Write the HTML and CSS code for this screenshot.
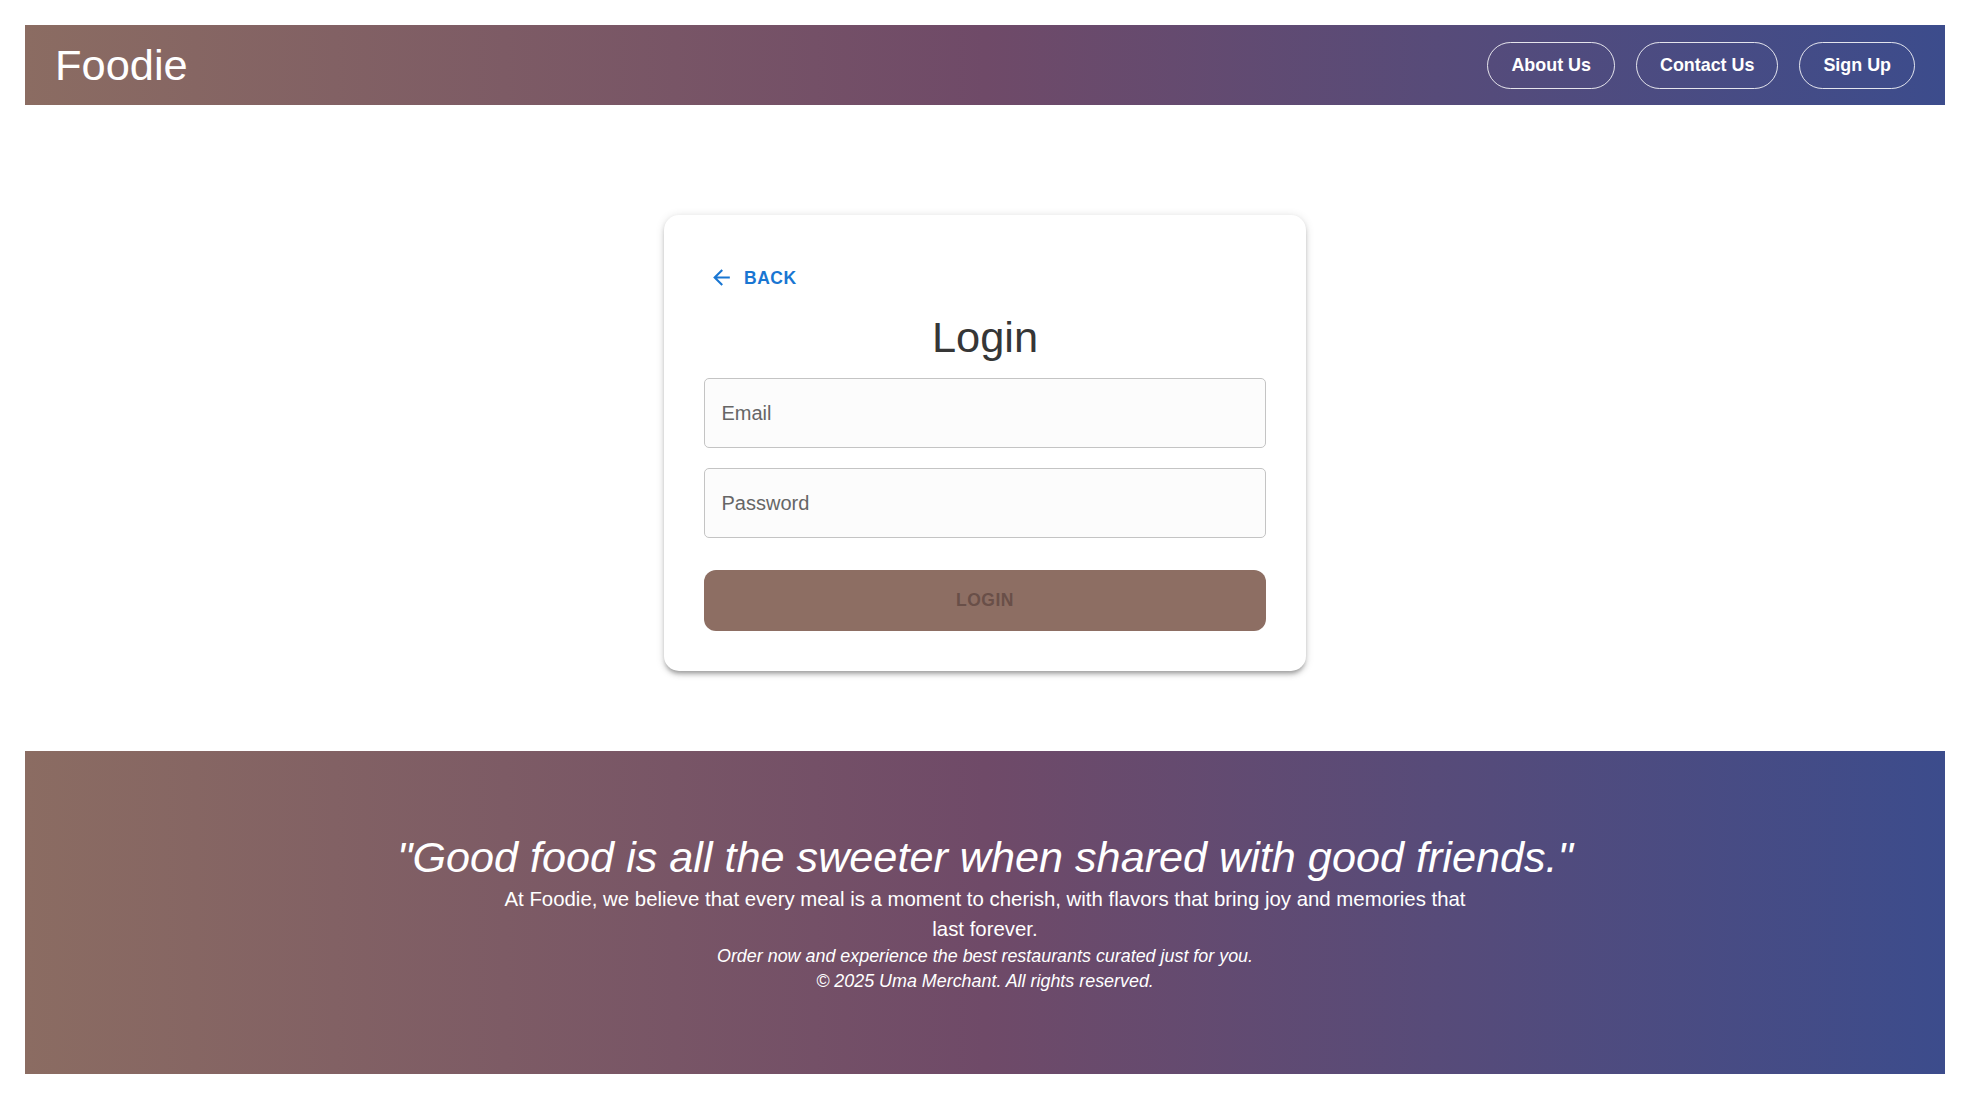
FILE: index.html
```html
<!DOCTYPE html>
<html lang="en">
<head>
<meta charset="utf-8">
<title>Foodie - Login</title>
<link rel="stylesheet" href="styles.css">
</head>
<body>
<header class="topbar">
  <div class="brand">Foodie</div>
  <nav class="nav">
    <a class="nav-btn" href="#">About Us</a>
    <a class="nav-btn" href="#">Contact Us</a>
    <a class="nav-btn" href="#">Sign Up</a>
  </nav>
</header>

<main class="main">
  <section class="card">
    <button class="back-btn" type="button">
      <svg class="back-icon" viewBox="0 0 24 24" aria-hidden="true"><path d="M20 11H7.83l5.59-5.59L12 4l-8 8 8 8 1.41-1.41L7.83 13H20v-2z"/></svg>
      <span>BACK</span>
    </button>
    <h1 class="title">Login</h1>
    <form class="form">
      <input class="field field-first" type="email" placeholder="Email">
      <input class="field field-next" type="password" placeholder="Password">
      <button class="login-btn" type="button">LOGIN</button>
    </form>
  </section>
</main>

<footer class="footer">
  <p class="quote">"Good food is all the sweeter when shared with good friends."</p>
  <p class="about">At Foodie, we believe that every meal is a moment to cherish, with flavors that bring joy and memories that last forever.</p>
  <p class="small">Order now and experience the best restaurants curated just for you.</p>
  <p class="small">© 2025 Uma Merchant. All rights reserved.</p>
</footer>
</body>
</html>
```

FILE: styles.css
```css
html, body {
  margin: 0;
}

body {
  padding: 25px 25px 0;
  background: #ffffff;
  font-family: "Liberation Sans", Arial, Helvetica, sans-serif;
  color: #333333;
}

.topbar {
  height: 80px;
  box-sizing: border-box;
  padding: 0 30px;
  display: flex;
  align-items: center;
  justify-content: space-between;
  background: linear-gradient(90deg, #8b6c62 0%, #6f4a68 50%, #3c4c8c 100%);
  color: #ffffff;
}

.brand {
  font-size: 43.4px;
  line-height: 52px;
  font-weight: 400;
}

.nav {
  display: flex;
  gap: 21px;
}

.nav-btn {
  display: flex;
  align-items: center;
  height: 47px;
  box-sizing: border-box;
  padding: 0 23px;
  border: 1px solid rgba(255, 255, 255, 0.85);
  border-radius: 24px;
  color: #ffffff;
  text-decoration: none;
  font-size: 17.9px;
  font-weight: 700;
}

.main {
  padding: 110px 0 80px;
}

.card {
  width: 642px;
  box-sizing: border-box;
  margin: 0 auto;
  padding: 40px;
  background: #ffffff;
  border-radius: 15px;
  box-shadow: 0 3.75px 3.75px -2.5px rgba(0, 0, 0, 0.2),
              0 3.75px 5px 0 rgba(0, 0, 0, 0.14),
              0 1.25px 10px 0 rgba(0, 0, 0, 0.12);
}

.back-btn {
  display: flex;
  align-items: center;
  padding: 7.5px 10px;
  border: 0;
  background: none;
  color: #1976d2;
  font-family: inherit;
  font-size: 17.5px;
  line-height: 30.6px;
  font-weight: 700;
  letter-spacing: 0.5px;
  cursor: pointer;
}

.back-icon {
  width: 25px;
  height: 25px;
  margin-left: -5px;
  margin-right: 10px;
  fill: currentColor;
}

.title {
  margin: 10px 0 0;
  text-align: center;
  font-size: 43.4px;
  line-height: 52.5px;
  font-weight: 400;
  color: #363636;
}

.form {
  margin: 0;
}

.field {
  display: block;
  width: 100%;
  height: 70px;
  box-sizing: border-box;
  padding: 0 17px 0 16.5px;
  border: 1px solid #c4c4c4;
  border-radius: 5px;
  background: #fcfcfc;
  font-family: inherit;
  font-size: 20px;
  color: #333333;
  outline: none;
}

.field::placeholder {
  color: #666666;
  opacity: 1;
}

.field-first {
  margin-top: 15px;
}

.field-next {
  margin-top: 20px;
}

.login-btn {
  display: block;
  width: 100%;
  height: 61px;
  margin-top: 32px;
  border: 0;
  border-radius: 12px;
  background: #8d6e63;
  color: #694f48;
  font-family: inherit;
  font-size: 17.5px;
  font-weight: 700;
  letter-spacing: 0.5px;
}

.footer {
  padding: 80px 20px;
  text-align: center;
  color: #ffffff;
  background: linear-gradient(90deg, #8b6c62 0%, #6f4a68 50%, #3c4c8c 100%);
}

.quote {
  margin: 0;
  font-size: 43.2px;
  line-height: 52.5px;
  font-style: italic;
}

.about {
  margin: 0 auto;
  max-width: 980px;
  font-size: 20.4px;
  line-height: 30px;
}

.small {
  margin: 0;
  font-size: 17.9px;
  line-height: 25px;
  font-style: italic;
}
```
